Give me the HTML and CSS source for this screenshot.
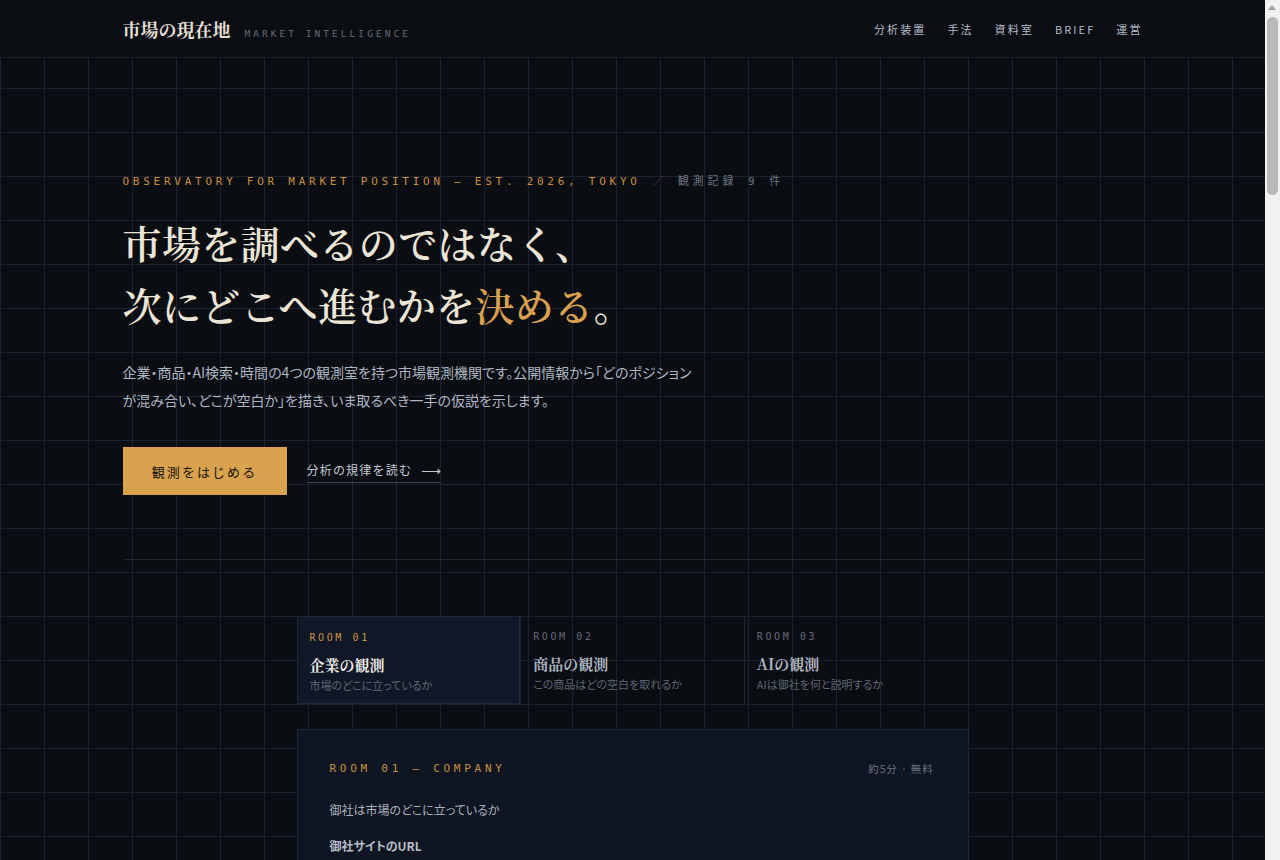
FILE: index.html
```html
<!DOCTYPE html>
<html lang="ja">
<head>
<meta charset="utf-8">
<title>市場の現在地 — Market Intelligence</title>
<link rel="stylesheet" href="styles.css">
</head>
<body>
<div class="page">
<header class="site-header">
  <div class="container header-inner">
    <div class="brand">
      <span class="brand-name">市場の現在地</span>
      <span class="brand-sub">MARKET INTELLIGENCE</span>
    </div>
    <nav class="nav">
      <a href="#">分析装置</a>
      <a href="#">手法</a>
      <a href="#">資料室</a>
      <a href="#">BRIEF</a>
      <a href="#">運営</a>
    </nav>
  </div>
</header>

<main>
  <section class="container hero">
    <p class="eyebrow"><span class="gold">OBSERVATORY FOR MARKET POSITION — EST. 2026, TOKYO</span><span class="sep">／</span><span class="count">観測記録 9 件</span></p>
    <h1 class="title">市場を調べるのではなく、<br>次にどこへ進むかを<span class="gold">決める</span>。</h1>
    <p class="lead">企業・商品・AI検索・時間の4つの観測室を持つ市場観測機関です。公開情報から「どのポジションが混み合い、どこが空白か」を描き、いま取るべき一手の仮説を示します。</p>
    <div class="actions">
      <a class="btn-primary" href="#">観測をはじめる</a>
      <a class="btn-link" href="#">分析の規律を読む<span class="arrow">⟶</span></a>
    </div>
  </section>

  <div class="container"><div class="divider"></div></div>

  <section class="rooms">
    <div class="tabs">
      <div class="tab active">
        <span class="tab-no">ROOM 01</span>
        <span class="tab-title">企業の観測</span>
        <span class="tab-desc">市場のどこに立っているか</span>
      </div>
      <div class="tab">
        <span class="tab-no">ROOM 02</span>
        <span class="tab-title">商品の観測</span>
        <span class="tab-desc">この商品はどの空白を取れるか</span>
      </div>
      <div class="tab">
        <span class="tab-no">ROOM 03</span>
        <span class="tab-title">AIの観測</span>
        <span class="tab-desc">AIは御社を何と説明するか</span>
      </div>
    </div>

    <div class="card">
      <div class="card-head">
        <span class="card-label">ROOM 01 — COMPANY</span>
        <span class="card-meta">約5分 · 無料</span>
      </div>
      <p class="card-q">御社は市場のどこに立っているか</p>
      <label class="field-label" for="url">御社サイトのURL</label>
      <input class="field" id="url" type="text" placeholder="https://example.co.jp">
      <label class="field-label" for="ind">業種・カテゴリ</label>
      <input class="field" id="ind" type="text" placeholder="例：BtoB SaaS／人事労務">
      <label class="field-label" for="rival">比較したい競合（任意）</label>
      <input class="field" id="rival" type="text" placeholder="競合のURLまたは社名">
      <a class="btn-primary wide" href="#">観測を開始する</a>
    </div>
  </section>
</main>
</div>

<div class="fake-scrollbar" aria-hidden="true">
  <span class="sb-arrow"></span>
  <span class="sb-thumb"></span>
</div>
</body>
</html>
```

FILE: styles.css
```css
* { box-sizing: border-box; }

html, body { margin: 0; padding: 0; }

body {
  background-color: #0a0d12;
  background-image:
    linear-gradient(#1a2131 1px, transparent 1px),
    linear-gradient(90deg, #1a2131 1px, transparent 1px);
  background-size: 44px 44px;
  color: #c9ced6;
  font-family: "Noto Sans CJK JP", "Noto Sans", sans-serif;
}

.page {
  margin-right: 15px;
  padding-bottom: 120px;
}

a { color: inherit; text-decoration: none; }

.container {
  max-width: 1020px;
  margin: 0 auto;
}

/* header */
.site-header {
  background: #0b0e13;
  border-bottom: 1px solid #1c2331;
  height: 58px;
}

.header-inner {
  height: 57px;
  display: flex;
  align-items: center;
  justify-content: space-between;
}

.brand {
  display: flex;
  align-items: baseline;
  gap: 14px;
}

.brand-name {
  font-family: "Noto Serif CJK JP", "Noto Serif JP", serif;
  font-weight: 700;
  font-size: 18px;
  color: #e4dfd4;
}

.brand-sub {
  font-family: "DejaVu Sans Mono", monospace;
  font-size: 9.5px;
  letter-spacing: 0.32em;
  color: #646c78;
}

.nav {
  display: flex;
  gap: 21px;
  font-size: 11px;
  letter-spacing: 0.19em;
  color: #b4bbc6;
}

/* hero */
.hero {
  padding-top: 116px;
  padding-bottom: 64px;
}

.eyebrow {
  margin: 0;
  font-family: "DejaVu Sans Mono", "Noto Sans CJK JP", monospace;
  font-size: 11px;
  letter-spacing: 0.34em;
  line-height: 16px;
}

.gold { color: #d39a48; }
.eyebrow .gold { color: #c98f3f; }

.sep {
  color: #4c5563;
  margin: 0 14px 0 12px;
  letter-spacing: 0;
}

.count {
  color: #6c7583;
  letter-spacing: 0.36em;
}

.title {
  margin: 21px 0 0;
  font-family: "Noto Serif CJK JP", "Noto Serif JP", serif;
  font-weight: 600;
  font-size: 39px;
  line-height: 62px;
  letter-spacing: 0.01em;
  color: #ece5d6;
}

.title .gold { color: #d9a04f; }

.lead {
  margin: 23px 0 0;
  max-width: 580px;
  font-size: 14px;
  line-height: 28px;
  color: #aeb6c2;
  font-feature-settings: "palt";
}

.actions {
  margin-top: 33px;
  display: flex;
  align-items: center;
  gap: 20px;
}

.btn-primary {
  display: inline-flex;
  align-items: center;
  justify-content: center;
  width: 164px;
  height: 48px;
  background: #d9a24f;
  color: #1b1408;
  font-size: 13px;
  letter-spacing: 0.16em;
}

.btn-link {
  font-size: 12px;
  letter-spacing: 0.1em;
  color: #c3cad5;
  border-bottom: 1px solid #3a4352;
  padding-bottom: 2px;
  display: inline-flex;
  align-items: center;
  gap: 9px;
}

.arrow {
  letter-spacing: 0;
  font-size: 14px;
}

.divider {
  height: 1px;
  background: #1e2634;
}

/* rooms */
.rooms {
  max-width: 672px;
  margin: 56px auto 0;
}

.tabs {
  display: grid;
  grid-template-columns: repeat(3, 1fr);
  border-right: 1px solid #1d2534;
}

.tab {
  display: flex;
  flex-direction: column;
  padding: 14px 12px 10px;
  height: 88px;
  border-left: 1px solid #1d2534;
}

.tab.active {
  background: #101726;
  border: 1px solid #1f2839;
}

.tab-no {
  font-family: "DejaVu Sans Mono", monospace;
  font-size: 10px;
  letter-spacing: 0.26em;
  color: #626b78;
  line-height: 14px;
}

.tab.active .tab-no { color: #c99240; }

.tab-title {
  margin-top: 10px;
  font-family: "Noto Serif CJK JP", "Noto Serif JP", serif;
  font-weight: 700;
  font-size: 15px;
  line-height: 20px;
  color: #aeb5c0;
}

.tab.active .tab-title { color: #eceae4; }

.tab-desc {
  margin-top: 2px;
  font-size: 11px;
  line-height: 16px;
  color: #5e6774;
  font-feature-settings: "palt";
}

.card {
  margin-top: 25px;
  background: #0f1522;
  border: 1px solid #1e2738;
  padding: 31px 34px 40px 32px;
}

.card-head {
  display: flex;
  justify-content: space-between;
  align-items: center;
}

.card-label {
  font-family: "DejaVu Sans Mono", monospace;
  font-size: 11px;
  letter-spacing: 0.34em;
  color: #c99240;
}

.card-meta {
  font-size: 10.5px;
  letter-spacing: 0.08em;
  color: #6a7381;
}

.card-q {
  margin: 25px 0 0;
  font-size: 12px;
  color: #aab2be;
  font-feature-settings: "palt";
}

.field-label {
  display: block;
  margin-top: 19px;
  font-size: 12px;
  font-weight: 700;
  color: #b6bdc8;
  font-feature-settings: "palt";
}

.field {
  display: block;
  width: 100%;
  margin-top: 6px;
  height: 42px;
  background: #0a0e17;
  border: 1px solid #232c3c;
  color: #c9ced6;
  padding: 0 12px;
  font-family: "Noto Sans CJK JP", sans-serif;
  font-size: 13px;
}

.field::placeholder { color: #4e5765; }

.btn-primary.wide {
  margin-top: 28px;
  width: 100%;
}

/* simulated browser scrollbar (overlay) */
.fake-scrollbar {
  position: fixed;
  top: 0;
  right: 0;
  width: 15px;
  height: 100vh;
  background: #f1f1f1;
}

.sb-arrow {
  position: absolute;
  top: 5px;
  left: 3px;
  width: 0;
  height: 0;
  border-left: 4.5px solid transparent;
  border-right: 4.5px solid transparent;
  border-bottom: 5px solid #a3a3a3;
}

.sb-thumb {
  position: absolute;
  top: 17px;
  left: 2px;
  width: 11px;
  height: 178px;
  border-radius: 6px;
  background: #b8b8b8;
}
```
